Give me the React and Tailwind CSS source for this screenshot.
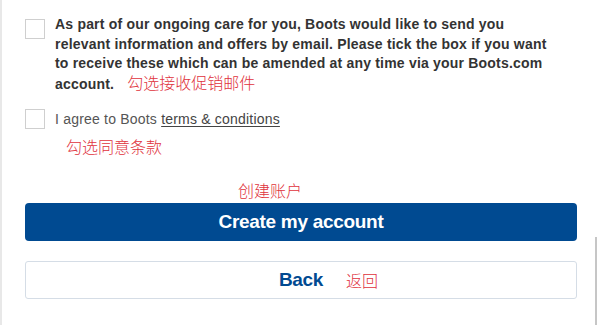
import React from "react";

const Note = ({ children, className = "" }) => (
  <span
    className={`text-[16px] leading-none text-[#e0323c] font-['Noto_Sans_CJK_SC',sans-serif] font-light tracking-normal ${className}`}
  >
    {children}
  </span>
);

const Box = () => (
  <div className="w-[20px] h-[20px] shrink-0 border border-[#cfcfcf] bg-white" />
);

export default function App() {
  return (
    <div className="relative min-h-screen h-[325px] overflow-hidden bg-white border-l-2 border-[#e8e8e8] font-['Liberation_Sans',Arial,sans-serif]">
      <div className="pl-[23px] pr-[22px] pt-[15px]">
        <div className="flex gap-[10px]">
          <div className="mt-[4px]">
            <Box />
          </div>
          <p className="w-[497px] text-[14px] leading-[19.7px] font-bold text-[#333] tracking-[0.2px]">
            As part of our ongoing care for you, Boots would like to send you
            relevant information and offers by email. Please tick the box if you
            want to receive these which can be amended at any time via your
            Boots.com account.
            <Note className="ml-[13px]">勾选接收促销邮件</Note>
          </p>
        </div>

        <div className="flex items-center gap-[10px] mt-[14px]">
          <Box />
          <span className="text-[14px] text-[#555] tracking-[0.2px]">
            I agree to Boots{" "}
            <span className="underline underline-offset-2 text-[#444]">
              terms &amp; conditions
            </span>
          </span>
        </div>
        <div className="pl-[41px] mt-[6px] h-[16px]">
          <Note>勾选同意条款</Note>
        </div>

        <div className="pl-[213px] mt-[28px] h-[16px]">
          <Note>创建账户</Note>
        </div>

        <button className="mt-[7px] w-full h-[38px] rounded-[4px] bg-[#004a91] text-white text-[19px] font-bold tracking-[-0.3px]">
          Create my account
        </button>

        <button className="relative mt-[20px] w-full h-[38px] rounded-[3px] border border-[#d5dde6] bg-white text-[#004a91] text-[19px] font-bold tracking-[-0.3px]">
          Back
          <Note className="absolute left-[320px] top-[10px]">返回</Note>
        </button>
      </div>

      <div className="absolute right-[2px] top-[237px] bottom-0 w-[2px] bg-[#c6c6c6]" />
    </div>
  );
}
